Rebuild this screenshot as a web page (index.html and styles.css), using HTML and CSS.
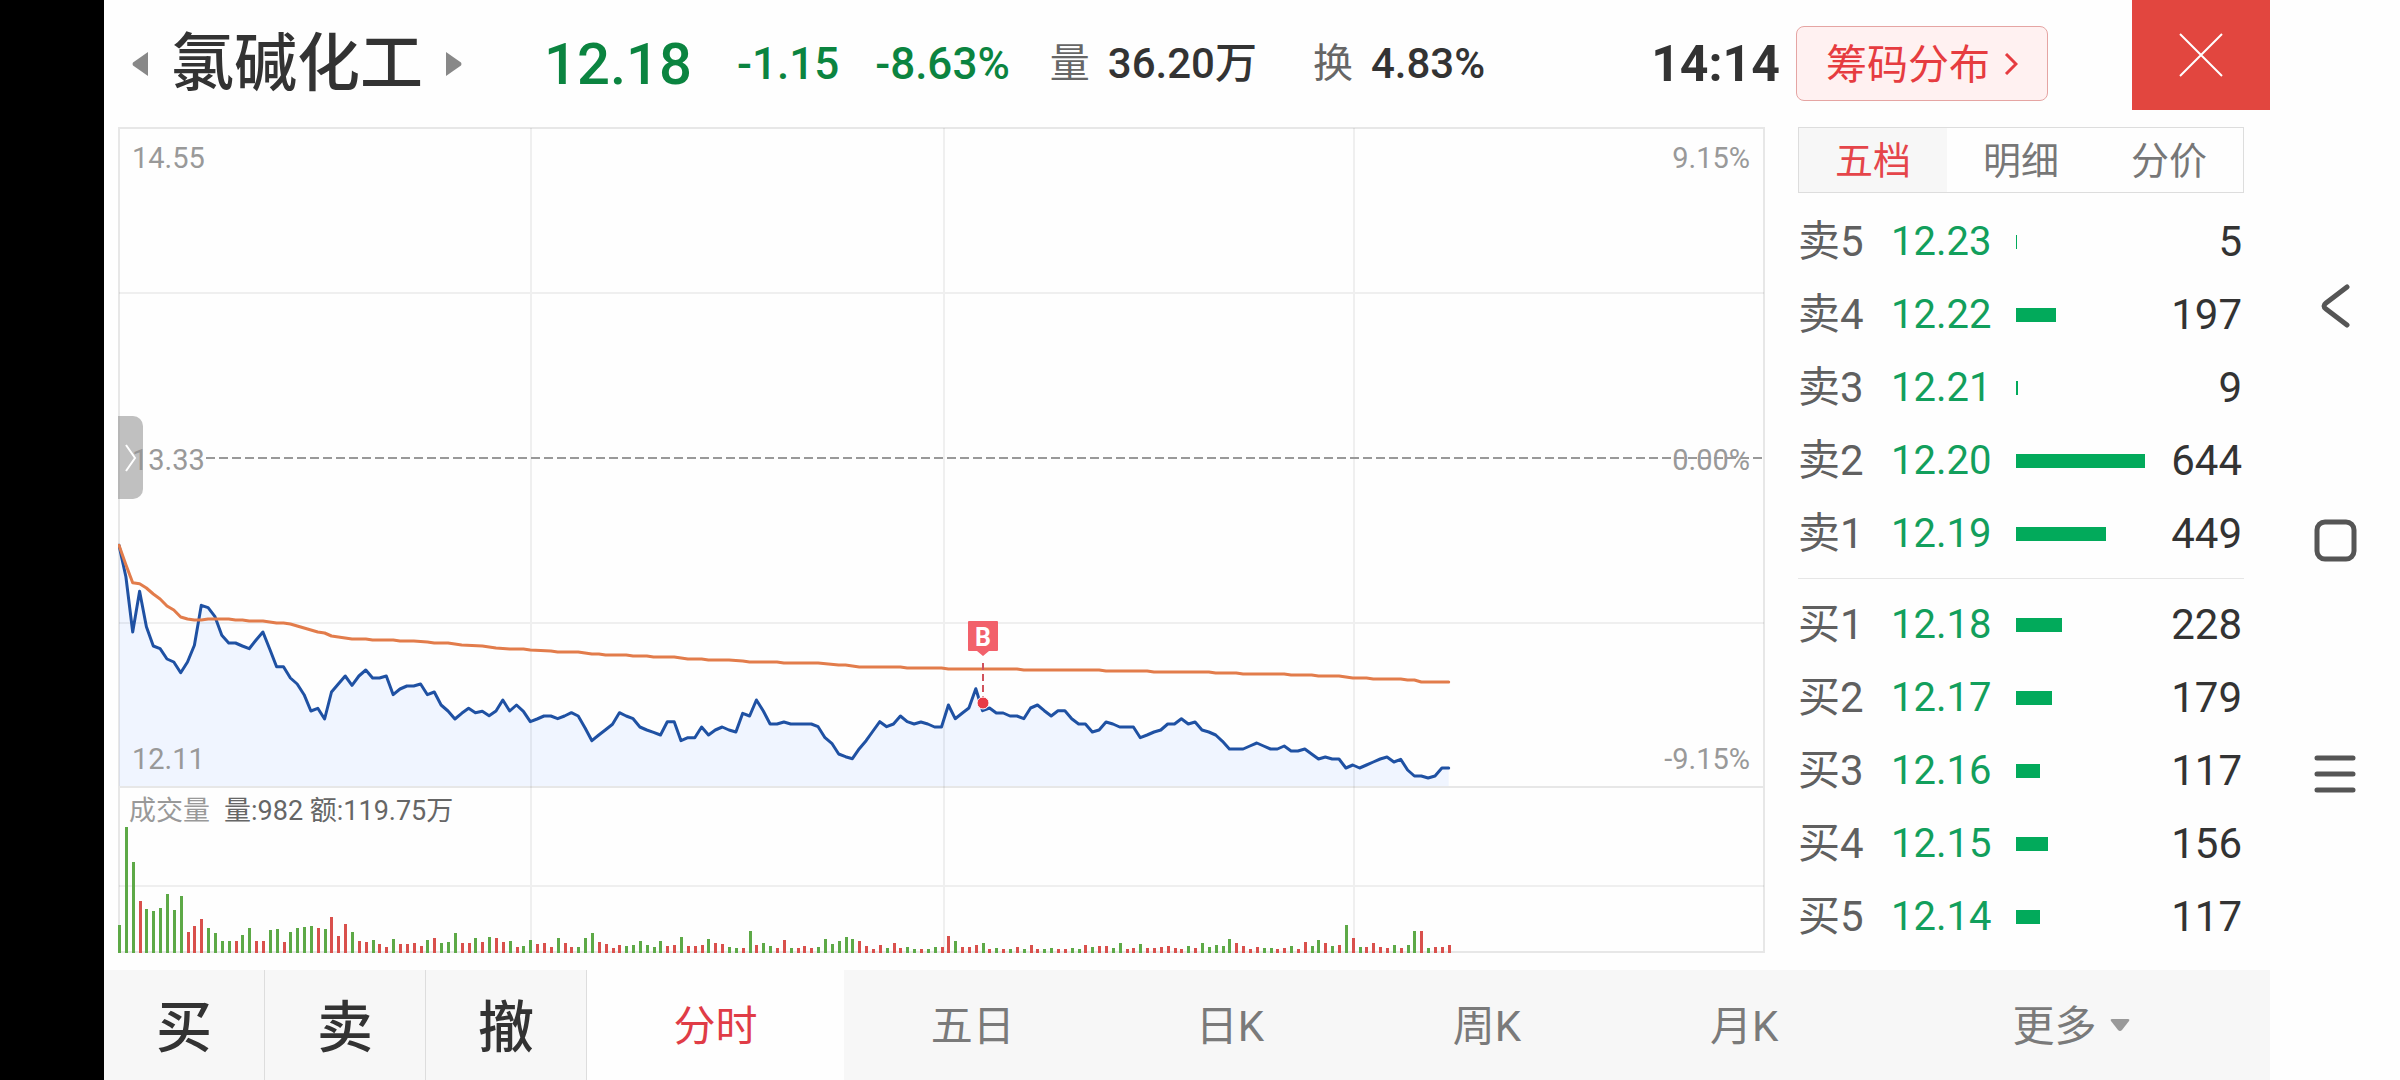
FILE: index.html
```html
<!DOCTYPE html>
<html lang="zh-CN">
<head>
<meta charset="utf-8">
<title>氯碱化工 分时</title>
<link rel="stylesheet" href="styles.css">
</head>
<body>
<div class="cutout"></div>
<div class="app">
  <header class="quote">
    <button class="step" aria-label="上一只"><svg width="17" height="26" viewBox="0 0 17 26"><path d="M16 1v24L1 14.5q-1-1.500 0-3z"/></svg></button>
    <h1 class="name">氯碱化工</h1>
    <button class="step" aria-label="下一只"><svg width="17" height="26" viewBox="0 0 17 26"><path d="M1 1v24l15-10.500q1-1.500 0-3z"/></svg></button>
    <strong class="price">12.18</strong>
    <span class="change">-1.15</span>
    <span class="change">-8.63%</span>
    <dl class="stats">
      <div class="stat"><dt>量</dt><dd>36.20万</dd></div>
      <div class="stat"><dt>换</dt><dd>4.83%</dd></div>
    </dl>
    <time class="clock">14:14</time>
    <button class="chips"><span class="label">筹码分布</span><svg width="14" height="22" viewBox="0 0 14 22"><path d="M2 1l10 10L2 21"/></svg></button>
    <button class="close" aria-label="关闭"><svg width="44" height="44" viewBox="0 0 44 44"><path d="M1 1l42 42M43 1L1 43"/></svg></button>
  </header>

  <main class="content">
    <section class="chart">
      <svg class="plot" viewBox="118 127 1647 826" role="img" aria-label="分时走势">
        <path id="area" class="area"/>
        <g class="grid">
          <path d="M119 293H1764M119 623H1764M119 886H1764M531 128V952M944 128V952M1354 128V952"/>
          <path class="frame" d="M119 128H1764V952H119ZM119 787H1764"/>
        </g>
        <path class="zero" d="M206 458H1764"/>
        <g id="volume"></g>
        <path id="price" class="line line-price"/>
        <path id="average" class="line line-average"/>
        <g class="axis">
          <text x="132" y="168">14.55</text>
          <text x="132" y="470">13.33</text>
          <text x="132" y="769">12.11</text>
          <g text-anchor="end">
            <text x="1750" y="168">9.15%</text>
            <text x="1750" y="470">0.00%</text>
            <text x="1750" y="769">-9.15%</text>
          </g>
          <g class="volume-label">
            <text x="129" y="820">成交量</text>
            <text class="detail" x="224" y="820">量:982 额:119.75万</text>
          </g>
        </g>
        <g class="marker">
          <path class="flag" d="M968 621h29q1 0 1 1v28q0 1-1 1h-8l-6 5-6-5h-8q-1 0-1-1v-28q0-1 1-1z"/>
          <text x="983" y="646" text-anchor="middle">B</text>
          <path class="stem" d="M983 663V697"/>
          <circle cx="983" cy="703" r="6"/>
        </g>
      </svg>
      <button class="drawer" aria-label="展开"><svg width="12" height="28" viewBox="0 0 12 28"><path d="M1 1l9 13-9 13"/></svg></button>
    </section>

    <aside class="book">
      <div class="views">
        <button class="view view-on"><span class="label">五档</span></button>
        <button class="view"><span class="label">明细</span></button>
        <button class="view"><span class="label">分价</span></button>
      </div>
      <table class="levels">
        <tr><th scope="row">卖5</th><td class="at">12.23</td><td><div class="bar" style="width:1px"></div></td><td class="lots">5</td></tr>
        <tr><th scope="row">卖4</th><td class="at">12.22</td><td><div class="bar" style="width:40px"></div></td><td class="lots">197</td></tr>
        <tr><th scope="row">卖3</th><td class="at">12.21</td><td><div class="bar" style="width:2px"></div></td><td class="lots">9</td></tr>
        <tr><th scope="row">卖2</th><td class="at">12.20</td><td><div class="bar" style="width:129px"></div></td><td class="lots">644</td></tr>
        <tr><th scope="row">卖1</th><td class="at">12.19</td><td><div class="bar" style="width:90px"></div></td><td class="lots">449</td></tr>
      </table>
      <hr class="split">
      <table class="levels">
        <tr><th scope="row">买1</th><td class="at">12.18</td><td><div class="bar" style="width:46px"></div></td><td class="lots">228</td></tr>
        <tr><th scope="row">买2</th><td class="at">12.17</td><td><div class="bar" style="width:36px"></div></td><td class="lots">179</td></tr>
        <tr><th scope="row">买3</th><td class="at">12.16</td><td><div class="bar" style="width:24px"></div></td><td class="lots">117</td></tr>
        <tr><th scope="row">买4</th><td class="at">12.15</td><td><div class="bar" style="width:32px"></div></td><td class="lots">156</td></tr>
        <tr><th scope="row">买5</th><td class="at">12.14</td><td><div class="bar" style="width:24px"></div></td><td class="lots">117</td></tr>
      </table>
    </aside>
  </main>

  <footer class="tabs">
    <button class="trade"><span class="label">买</span></button>
    <button class="trade"><span class="label">卖</span></button>
    <button class="trade"><span class="label">撤</span></button>
    <button class="period period-on"><span class="label">分时</span></button>
    <button class="period"><span class="label">五日</span></button>
    <button class="period"><span class="label">日K</span></button>
    <button class="period"><span class="label">周K</span></button>
    <button class="period"><span class="label">月K</span></button>
    <button class="period period-more"><span class="label">更多</span><svg width="20" height="14" viewBox="0 0 20 14"><path d="M2 1h16q2 0 1 2l-7 9q-2 2-4 0L1 3Q0 1 2 1z"/></svg></button>
  </footer>
</div>
<nav class="system">
  <button class="key" aria-label="返回"><svg width="44" height="44" viewBox="0 0 44 44"><path d="M34 3L13 19q-4 3 0 6l21 16"/></svg></button>
  <button class="key" aria-label="主页"><svg width="44" height="44" viewBox="0 0 44 44"><rect x="4" y="4" width="37" height="37" rx="8"/></svg></button>
  <button class="key" aria-label="最近任务"><svg width="44" height="44" viewBox="0 0 44 44"><path d="M4 6h36M4 22h36M4 38h36"/></svg></button>
</nav>
<script src="chart.js"></script>
</body>
</html>
```
FILE: chart.js
```js
// One entry per traded minute; 240 minutes span the plot width.
const LEFT = 119, STEP = 1645 / 240, FLOOR = 786, BASE = 953;

// Depth below the y=520 line, in thirds of a unit.
const price = [76,170,336,214,320,378,386,417,426,458,426,376,256,263,290,346,369,369,378,386,
360,336,388,440,440,474,492,524,573,565,597,516,492,468,496,468,450,474,474,468,
524,507,498,498,492,524,516,555,573,597,580,565,578,574,587,573,540,573,555,574,
605,597,588,588,596,588,578,588,624,662,645,629,613,578,588,596,621,630,637,645,
605,605,662,653,653,621,645,630,621,630,636,580,588,540,573,612,612,606,612,612,
612,612,620,653,670,702,710,716,686,662,633,605,620,612,588,605,612,606,612,621,
621,555,596,580,564,506,572,564,579,579,588,588,596,564,555,572,588,572,572,596,
612,612,636,630,606,612,621,621,621,653,645,636,630,612,612,596,612,606,630,636,
645,664,687,687,687,678,669,678,687,687,678,693,693,687,702,717,711,717,717,744,
735,744,735,726,717,711,726,718,750,768,768,774,768,744,744];

// Average price: [minute, depth] at each change of slope.
const average = [[0,76],[1,134],[2,188],[3,191],[4,204],[5,222],[6,237],[7,258],[8,270],[9,291],
[10,297],[11,300],[12,300],[13,297],[16,297],[17,300],[18,300],[19,303],[21,303],[23,309],[24,309],
[25,312],[26,318],[29,336],[30,339],[31,348],[34,357],[36,357],[37,360],[40,360],[41,363],[43,363],
[45,366],[46,369],[48,369],[50,375],[53,378],[55,384],[57,387],[59,387],[60,390],[63,393],[64,396],
[67,396],[69,402],[70,402],[71,405],[74,405],[75,408],[77,408],[78,411],[81,411],[83,417],[85,417],
[86,420],[89,420],[91,423],[92,426],[96,426],[97,429],[102,429],[105,435],[106,435],[108,441],
[114,441],[115,444],[120,444],[121,447],[131,447],[132,450],[143,450],[144,453],[150,453],[151,456],
[159,456],[160,459],[163,459],[164,462],[170,462],[171,465],[174,465],[175,468],[178,468],[180,474],
[182,474],[183,477],[187,477],[188,480],[189,480],[190,486],[194,486]];

// Volume bars: g = falling minute, r = rising minute, then the height.
const volume = `g28 g126 g91 r52 g44 g42 g45 g59 g43 g57 r21 r27 r34 g25 g20 g12 g12 r12 g18 g25
r12 r12 g23 g24 r11 g21 g25 g26 g27 r25 g24 r36 r17 r29 g21 r12 r11 g13 r9 r6
g14 r9 r9 r10 r7 g13 r15 g10 g11 g20 r10 r10 g15 r11 g16 r15 r11 g12 r6 g7
g13 r9 r10 r6 g15 r10 r6 g6 g15 g20 r11 r9 r5 r8 g7 g8 g12 g8 g6 g12
r7 r8 g16 r7 r7 r8 g14 r10 r9 g6 g5 r5 g22 r8 g10 g7 r5 r13 g5 r5
r7 r5 g6 g14 g9 g12 g16 g14 r12 r7 r4 r8 g5 r10 r5 g6 g4 r4 g4 g6
r6 r17 g12 r6 r6 r8 g10 r4 g5 r4 g4 r6 g4 r8 r4 g4 g5 r4 r4 g5
g4 r8 g6 r7 r7 g5 g10 r4 r5 g9 r5 r5 r6 r7 r5 r4 g7 r5 g10 g6
g8 g7 g14 r10 r7 r4 r6 g5 g5 r4 r5 g7 r4 r11 g7 g13 r10 g7 r8 g28
r15 g6 r6 r10 r6 r5 g8 r5 g8 g22 r22 g5 r6 r6 r8`.split(/\s+/);

const point = (minute, depth) => (LEFT + minute * STEP).toFixed(1) + ' ' + (520 + depth / 3).toFixed(1);
const trace = pairs => 'M' + pairs.map(p => point(p[0], p[1])).join('L');
const draw = (id, d) => document.getElementById(id).setAttribute('d', d);

const priceTrace = trace(price.map((depth, minute) => [minute, depth]));
draw('price', priceTrace);
draw('area', priceTrace + `V${FLOOR}H${LEFT}Z`);
draw('average', trace(average));

document.getElementById('volume').innerHTML = volume.map((entry, minute) => {
  const height = Number(entry.slice(1));
  const x = Math.round(LEFT + minute * STEP) - 1;
  return `<rect class="${entry[0] === 'g' ? 'fall' : 'rise'}" x="${x}" y="${BASE - height}" width="3" height="${height}"/>`;
}).join('');
```
FILE: styles.css
```css
* { box-sizing: border-box; }

body {
  margin: 0;
  min-height: 100vh;
  display: flex;
  background: #fefefe;
  color: #333;
  font-family: Roboto, "Noto Sans CJK SC", sans-serif;
}

button {
  margin: 0;
  padding: 0;
  border: 0;
  background: none;
  color: inherit;
  font: inherit;
  display: flex;
  align-items: center;
  justify-content: center;
}

svg { display: block; fill: none; }

/* Chinese glyphs sit low in the Roboto line box; the padding centres them */
.label { padding-bottom: 5px; }

.cutout { flex: 0 0 104px; background: #000; }

.app { flex: 1; min-width: 0; display: flex; flex-direction: column; }

/* Quote header */
.quote {
  height: 127px;
  padding-left: 28px;
  display: flex;
  align-items: center;
  white-space: nowrap;
}
.step svg { fill: #888; }
.name { margin: 0 22px; font-size: 63px; font-weight: 500; line-height: 80px; }
.price { margin-left: 82px; font-size: 58px; font-weight: 500; line-height: 80px; color: #0b8440; }
.change { margin-left: 45px; font-size: 44px; line-height: 80px; color: #0b8440; font-weight: 500; }
.change + .change { margin-left: 36px; }
.stats { margin: 0 0 0 40px; display: flex; gap: 56px; }
.stat { display: flex; align-items: center; gap: 18px; line-height: 80px; }
.stat dt { font-size: 40px; color: #666; }
.stat dd { margin: 0; font-size: 42px; font-weight: 500; }
.clock { margin-left: auto; font-size: 50px; font-weight: 700; }
.chips {
  width: 252px;
  height: 75px;
  margin-left: 16px;
  gap: 14px;
  border: 1px solid #e5a5a3;
  border-radius: 8px;
  background: #fff1f1;
  color: #e63c40;
  font-size: 41px;
}
.chips svg { stroke: #e63c40; stroke-width: 3; }
.close {
  width: 138px;
  height: 110px;
  margin-left: 84px;
  align-self: flex-start;
  background: #e2463f;
}
.close svg { stroke: #fff; stroke-width: 2; }

/* Chart and order book */
.content {
  flex: 1;
  padding: 0 26px 17px 14px;
  display: grid;
  grid-template-columns: 1fr 446px;
  column-gap: 33px;
}
.chart { position: relative; }
.plot { width: 100%; height: auto; }
.area { fill: #f0f5ff; }
.grid path { stroke: #000; stroke-opacity: .06; stroke-width: 2; }
.grid .frame { stroke-opacity: .09; }
.zero { stroke: #999; stroke-width: 2; stroke-dasharray: 9 4; }
.line { stroke-width: 3; stroke-linejoin: round; stroke-linecap: round; }
.line-price { stroke: #1f51a3; }
.line-average { stroke: #e27c4b; }
.fall { fill: #5da947; }
.rise { fill: #d9504c; }
.axis { font-size: 29px; fill: #999; }
.volume-label { font-size: 27px; }
.axis .detail { fill: #666; }
.marker .flag { fill: #f2616b; }
.marker text { font-size: 25px; font-weight: 700; fill: #fff; }
.marker .stem { stroke: #d0525c; stroke-width: 2; stroke-dasharray: 7 4; }
.marker circle { fill: #e83a45; stroke: #fff; stroke-width: 1; }
.drawer {
  position: absolute;
  left: 0;
  top: 35%;
  width: 25px;
  height: 83px;
  border-radius: 0 10px 10px 0;
  background: rgba(150, 150, 150, .6);
}
.drawer svg { stroke: #fff; stroke-width: 2; }

.views { height: 66px; margin-bottom: 12px; display: flex; border: 1px solid #ddd; }
.view { flex: 1; font-size: 38px; color: #777; }
.view-on { background: #f7f7f7; color: #e5454a; }
.levels { width: 100%; border-collapse: collapse; table-layout: fixed; }
.levels tr { height: 73px; }
.levels th, .levels td { padding: 0; line-height: 60px; font-size: 42px; font-weight: 400; text-align: left; }
.levels th { width: 93px; color: #606060; }
.levels .at { width: 125px; font-size: 40px; color: #129f5c; }
.levels .lots { width: 96px; padding-right: 2px; text-align: right; color: #333; }
.bar { height: 14px; background: #02aa5b; }
.split { margin: 8px 0 9px; border: 0; height: 1px; background: #e6e6e6; }

/* Bottom tabs */
.tabs { height: 110px; display: flex; background: #f7f7f7; }
.trade { flex: 0 0 161px; border-right: 1px solid #ddd; font-size: 56px; font-weight: 500; }
.period { flex: 257 1 0; font-size: 42px; color: #7a7a7a; }
.period-on { background: #fefefe; color: #e03c46; }
.period-more { flex-grow: 397; gap: 14px; }
.period-more svg { fill: #999; }

/* System navigation */
.system {
  flex: 0 0 130px;
  display: flex;
  flex-direction: column;
  align-items: center;
  justify-content: center;
  gap: 190px;
}
.key svg { stroke: #555; stroke-width: 5; stroke-linecap: round; }
```
